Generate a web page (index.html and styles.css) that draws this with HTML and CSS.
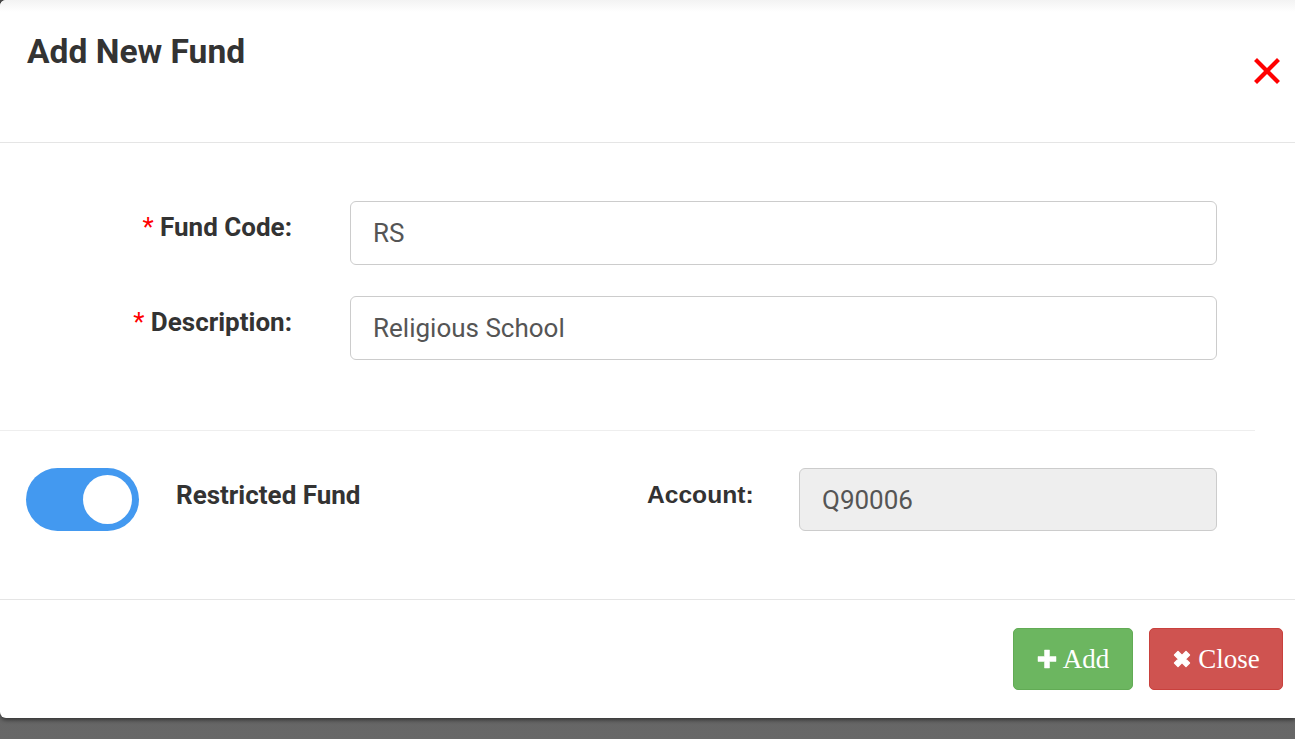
FILE: index.html
```html
<!DOCTYPE html>
<html>
<head>
<meta charset="utf-8">
<link rel="stylesheet" href="styles.css">
</head>
<body>
<div class="modal">
  <div class="modal-header">
    <h1 class="title">Add New Fund</h1>
    <span class="x-close" aria-label="close">
      <svg width="26" height="26" viewBox="0 0 26 26"><path d="M3 3 L23 23 M23 3 L3 23" stroke="#ff0000" stroke-width="4.2" stroke-linecap="square"/></svg>
    </span>
  </div>
  <div class="section-fields">
    <div class="form-row">
      <label class="field-label"><span class="req">*</span> Fund Code:</label>
      <div class="input">RS</div>
    </div>
    <div class="form-row">
      <label class="field-label"><span class="req">*</span> Description:</label>
      <div class="input">Religious School</div>
    </div>
  </div>
  <div class="section-options">
    <div class="toggle"><div class="knob"></div></div>
    <div class="restricted">Restricted Fund</div>
    <div class="account-label">Account:</div>
    <div class="input readonly">Q90006</div>
  </div>
  <div class="modal-footer">
    <button class="btn btn-add"><svg width="20" height="20" viewBox="0 0 20 20"><path d="M7.5 1h5v6.5H19v5h-6.5V19h-5v-6.5H1v-5h6.5z" fill="#fff" stroke="#fff" stroke-width="0.5" stroke-linejoin="round"/></svg>Add</button>
    <button class="btn btn-close"><svg width="20" height="20" viewBox="0 0 20 20"><path d="M2.5 6 L6 2.5 L10 6.5 L14 2.5 L17.5 6 L13.5 10 L17.5 14 L14 17.5 L10 13.5 L6 17.5 L2.5 14 L6.5 10 Z" fill="#fff" stroke="#fff" stroke-width="1.4" stroke-linejoin="round"/></svg>Close</button>
  </div>
</div>
</body>
</html>
```
FILE: styles.css
```css
html, body {
  margin: 0;
  padding: 0;
}
body {
  width: 1295px;
  height: 739px;
  overflow: hidden;
  background: linear-gradient(#4a4a4a, #676767);
  font-family: Roboto, "Liberation Sans", sans-serif;
}
.modal {
  height: 718px;
  background: #fff;
  border-radius: 6px 0 0 6px;
  box-shadow: 0 2px 4px rgba(0,0,0,0.5);
  display: flex;
  flex-direction: column;
}
.modal-header {
  height: 143px;
  flex-shrink: 0;
  box-sizing: border-box;
  border-bottom: 1px solid #e5e5e5;
  background: linear-gradient(#f3f3f3, #fff 12px);
  border-radius: 6px 0 0 0;
  display: flex;
  justify-content: space-between;
  align-items: flex-start;
  padding: 0 15px 0 27px;
}
.title {
  margin: 33px 0 0 0;
  font-size: 33.6px;
  line-height: 38px;
  font-weight: 700;
  color: #333;
}
.x-close {
  margin-top: 58px;
  width: 26px;
  height: 26px;
  display: block;
}
.x-close svg { display: block; }
.section-fields {
  height: 288px;
  flex-shrink: 0;
  box-sizing: border-box;
  padding-top: 58px;
  margin-right: 40px;
  border-bottom: 1px solid #eeeeee;
  display: flex;
  flex-direction: column;
  gap: 31px;
}
.form-row {
  display: grid;
  grid-template-columns: 292px 867px;
  column-gap: 58px;
  align-items: start;
}
.field-label {
  text-align: right;
  font-size: 26px;
  font-weight: 700;
  color: #333;
  padding-top: 11px;
  line-height: 30px;
}
.req {
  color: #f00;
  font-weight: 400;
}
.input {
  height: 64px;
  box-sizing: border-box;
  border: 1px solid #cccccc;
  border-radius: 6px;
  padding: 0 22px;
  display: flex;
  align-items: center;
  font-size: 26px;
  color: #555;
}
.section-options {
  height: 169px;
  flex-shrink: 0;
  box-sizing: border-box;
  border-bottom: 1px solid #e5e5e5;
  padding: 37px 0 0 26px;
  display: flex;
  align-items: flex-start;
}
.toggle {
  width: 113px;
  height: 63px;
  border-radius: 32px;
  background: #4399f0;
  display: flex;
  align-items: center;
  justify-content: flex-end;
  padding-right: 7px;
  box-sizing: border-box;
}
.knob {
  width: 49px;
  height: 49px;
  border-radius: 50%;
  background: #fff;
}
.restricted {
  margin-left: 37px;
  width: 471px;
  font-size: 26px;
  font-weight: 700;
  color: #333;
  line-height: 30px;
  padding-top: 12px;
}
.account-label {
  width: 152px;
  font-family: "Liberation Sans Narrow", "Liberation Sans", sans-serif;
  font-size: 24.6px;
  font-weight: 700;
  color: #333;
  line-height: 30px;
  padding-top: 12px;
}
.input.readonly {
  width: 418px;
  height: 63px;
  background: #eeeeee;
  font-size: 26px;
}
.modal-footer {
  flex: 1;
  display: flex;
  justify-content: flex-end;
  align-items: flex-start;
  padding: 28px 12px 0 0;
  gap: 16px;
}
.btn {
  height: 62px;
  border-radius: 5px;
  color: #fff;
  font-family: "Liberation Serif", "Times New Roman", serif;
  font-size: 27px;
  display: flex;
  align-items: center;
  justify-content: center;
  gap: 6px;
  padding: 0;
  cursor: pointer;
}
.btn svg { display: block; }
.btn-add {
  width: 120px;
  background: #6cb660;
  border: 1px solid #62ab55;
}
.btn-close {
  width: 134px;
  background: #cf5350;
  border: 1px solid #c9413d;
}
```
